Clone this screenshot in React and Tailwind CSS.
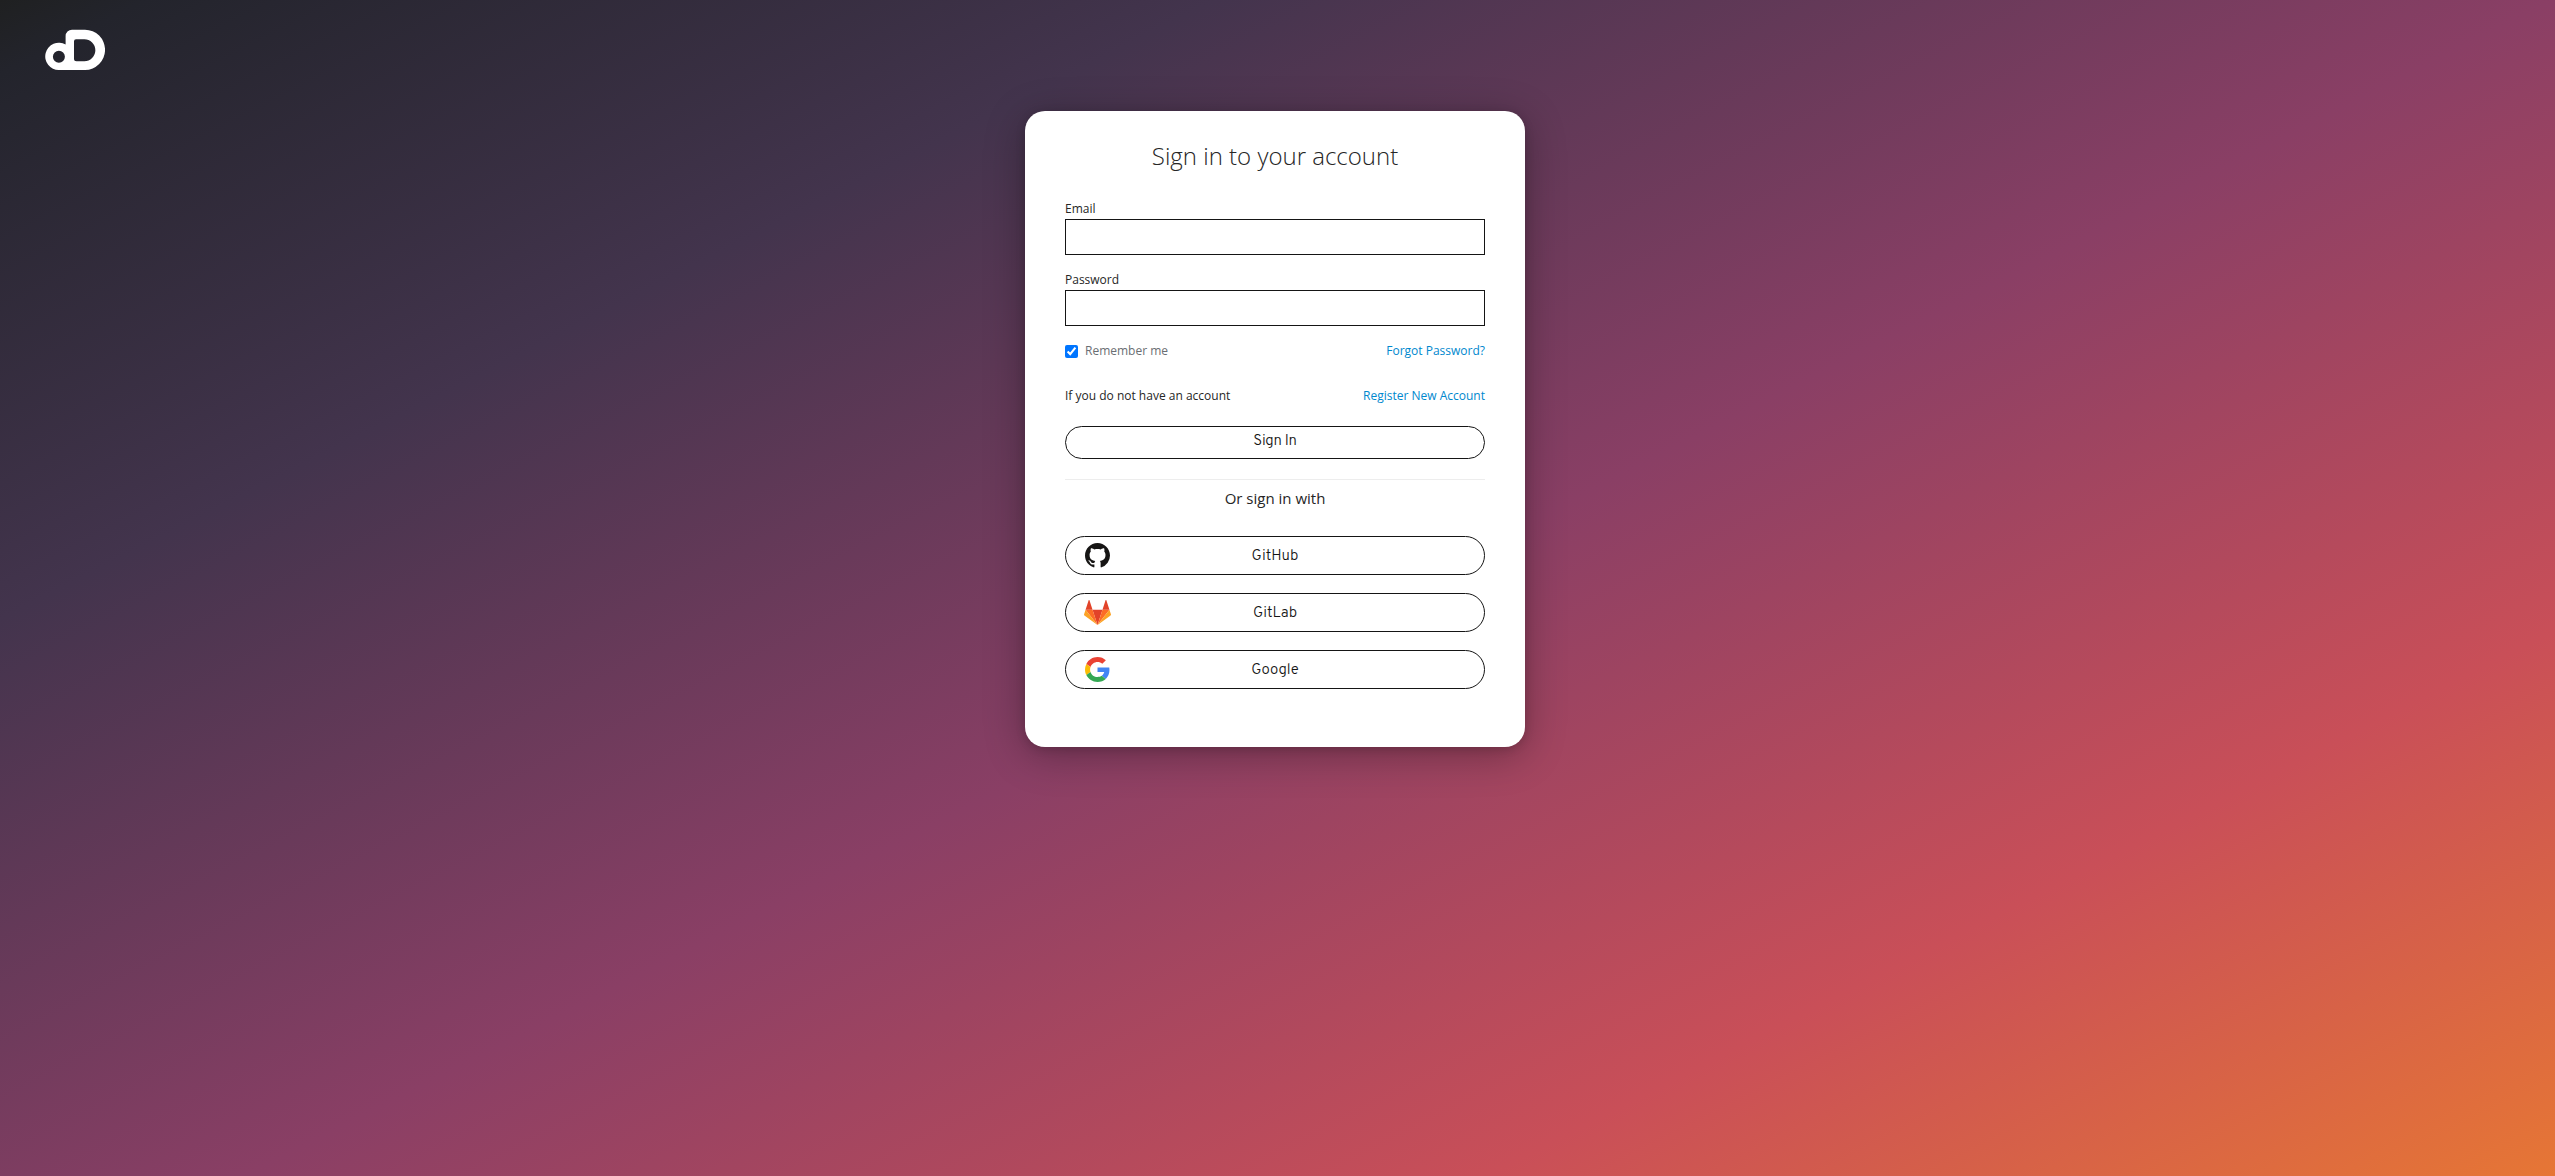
function Logo() {
  return (
    <svg viewBox="0 0 60 41" className="ml-[45px] mt-[29px] h-[41px] w-[60px]" fill="#fff" fillRule="evenodd">
      <path d="M27 0.7H40A20 20.1 0 0 1 40 41H14A13.6 13.6 0 1 1 20.6 15.6V7.1A6.4 6.4 0 0 1 27 0.7ZM31 10.2Q29 10.2 29 12.2V29.8Q29 32.3 31.5 32.3H39.3A11 11 0 0 0 39.3 10.2ZM13.9 21.8A6 6 0 1 0 13.9 33.8A6 6 0 1 0 13.9 21.8Z" />
    </svg>
  );
}

function GitHubIcon() {
  return (
    <svg viewBox="0 0 16 16" className="h-[25px] w-[27px]" fill="#161514">
      <path d="M8 0C3.58 0 0 3.58 0 8c0 3.54 2.29 6.53 5.47 7.59.4.07.55-.17.55-.38 0-.19-.01-.82-.01-1.49-2.01.37-2.53-.49-2.69-.94-.09-.23-.48-.94-.82-1.13-.28-.15-.68-.52-.01-.53.63-.01 1.08.58 1.23.82.72 1.21 1.87.87 2.33.66.07-.52.28-.87.51-1.07-1.78-.2-3.64-.89-3.64-3.95 0-.87.31-1.59.82-2.15-.08-.2-.36-1.02.08-2.12 0 0 .67-.21 2.2.82.64-.18 1.32-.27 2-.27s1.36.09 2 .27c1.53-1.04 2.2-.82 2.2-.82.44 1.1.16 1.92.08 2.12.51.56.82 1.27.82 2.15 0 3.07-1.87 3.75-3.65 3.95.29.25.54.73.54 1.48 0 1.07-.01 1.93-.01 2.2 0 .21.15.46.55.38A8.01 8.01 0 0 0 16 8c0-4.42-3.58-8-8-8z" />
    </svg>
  );
}

function GitLabIcon() {
  return (
    <svg viewBox="0 0 256 236" className="h-[25px] w-[27px]">
      <path fill="#E24329" d="M128.075 236.075l47.104-144.97H80.97l47.104 144.97z" />
      <path fill="#FC6D26" d="M128.075 236.074L80.97 91.104H14.956l113.119 144.97z" />
      <path fill="#FCA326" d="M14.956 91.104L.642 135.16a9.752 9.752 0 0 0 3.542 10.903l123.891 90.012-113.12-144.97z" />
      <path fill="#E24329" d="M14.956 91.105H80.97L52.601 3.79c-1.46-4.493-7.816-4.492-9.275 0l-28.37 87.315z" />
      <path fill="#FC6D26" d="M128.075 236.074l47.104-144.97h66.015l-113.12 144.97z" />
      <path fill="#FCA326" d="M241.194 91.104l14.314 44.056a9.752 9.752 0 0 1-3.543 10.903l-123.89 90.012 113.119-144.97z" />
      <path fill="#E24329" d="M241.194 91.105h-66.015l28.37-87.315c1.46-4.493 7.816-4.492 9.275 0l28.37 87.315z" />
    </svg>
  );
}

function GoogleIcon() {
  return (
    <svg viewBox="0 0 48 48" className="h-[25px] w-[27px]">
      <path fill="#EA4335" d="M24 9.5c3.54 0 6.71 1.22 9.21 3.6l6.85-6.85C35.9 2.38 30.47 0 24 0 14.62 0 6.51 5.38 2.56 13.22l7.98 6.19C12.43 13.72 17.74 9.5 24 9.5z" />
      <path fill="#4285F4" d="M46.98 24.55c0-1.57-.15-3.09-.38-4.55H24v9.02h12.94c-.58 2.96-2.26 5.48-4.78 7.18l7.73 6c4.51-4.18 7.09-10.36 7.09-17.65z" />
      <path fill="#FBBC05" d="M10.53 28.59c-.48-1.45-.76-2.99-.76-4.59s.27-3.14.76-4.59l-7.98-6.19C.92 16.46 0 20.12 0 24c0 3.88.92 7.54 2.56 10.78l7.97-6.19z" />
      <path fill="#34A853" d="M24 48c6.48 0 11.93-2.13 15.89-5.81l-7.73-6c-2.15 1.45-4.92 2.3-8.16 2.3-6.26 0-11.57-4.22-13.47-9.91l-7.98 6.19C6.51 42.62 14.62 48 24 48z" />
    </svg>
  );
}

function Field({ label, type }) {
  return (
    <label className="block">
      <span className="mb-0.5 block">{label}</span>
      <input type={type} className="block h-9 w-full border border-[#151515] bg-white px-2 outline-none" />
    </label>
  );
}

const providers = [
  { name: "GitHub", Icon: GitHubIcon },
  { name: "GitLab", Icon: GitLabIcon },
  { name: "Google", Icon: GoogleIcon },
];

export default function App() {
  return (
    <div className="flex h-[1176px] w-full flex-col bg-[linear-gradient(153deg,#1f2021_0%,#23242c_3%,#43344d_25%,#8a3f65_52.5%,#c94f58_78%,#e67635_100%)] font-['Open_Sans',sans-serif] text-[12px] leading-4 text-[#262626]">
      <header className="h-[111px]">
        <Logo />
      </header>
      <main className="flex justify-center pr-[5px]">
        <form className="h-[636px] w-[500px] rounded-[20px] bg-white px-10 pt-[29px] shadow-[0_8px_40px_rgba(0,0,0,0.3),0_2px_10px_rgba(0,0,0,0.15)]">
          <h1 className="mb-[29px] text-center text-[24px] leading-8 font-light">Sign in to your account</h1>
          <div className="flex flex-col gap-[17px]">
            <Field label="Email" type="email" />
            <Field label="Password" type="password" />
          </div>
          <div className="mt-[17px] flex items-center justify-between">
            <label className="flex items-center text-[#6a6e73]">
              <input type="checkbox" defaultChecked className="mr-[7px] h-[13px] w-[13px]" />
              Remember me
            </label>
            <a className="text-[#0088ce]">Forgot Password?</a>
          </div>
          <div className="mt-[29px] flex items-center justify-between">
            <span>If you do not have an account</span>
            <a className="text-[#0088ce]">Register New Account</a>
          </div>
          <button
            type="button"
            className="mt-[22px] flex h-[33px] w-full justify-center rounded-full border border-[#151515] pt-[5px] font-['Overpass','Open_Sans',sans-serif] text-[15px] leading-5 font-light tracking-[-0.3px] text-[#151515]"
          >
            Sign In
          </button>
          <hr className="mt-5 border-t border-[#ededed]" />
          <p className="mt-[6px] text-center text-[15px] leading-6">Or sign in with</p>
          <div className="mt-[26px] flex flex-col gap-[18px]">
            {providers.map(({ name, Icon }) => (
              <button
                key={name}
                type="button"
                className="grid h-[39px] w-full grid-cols-[27px_1fr_27px] items-center rounded-full border border-[#151515] px-[18px] font-['Overpass','Open_Sans',sans-serif] text-[15px] leading-5 font-light text-[#151515]"
              >
                <Icon />
                <span className="pt-[3px]">{name}</span>
              </button>
            ))}
          </div>
        </form>
      </main>
    </div>
  );
}
